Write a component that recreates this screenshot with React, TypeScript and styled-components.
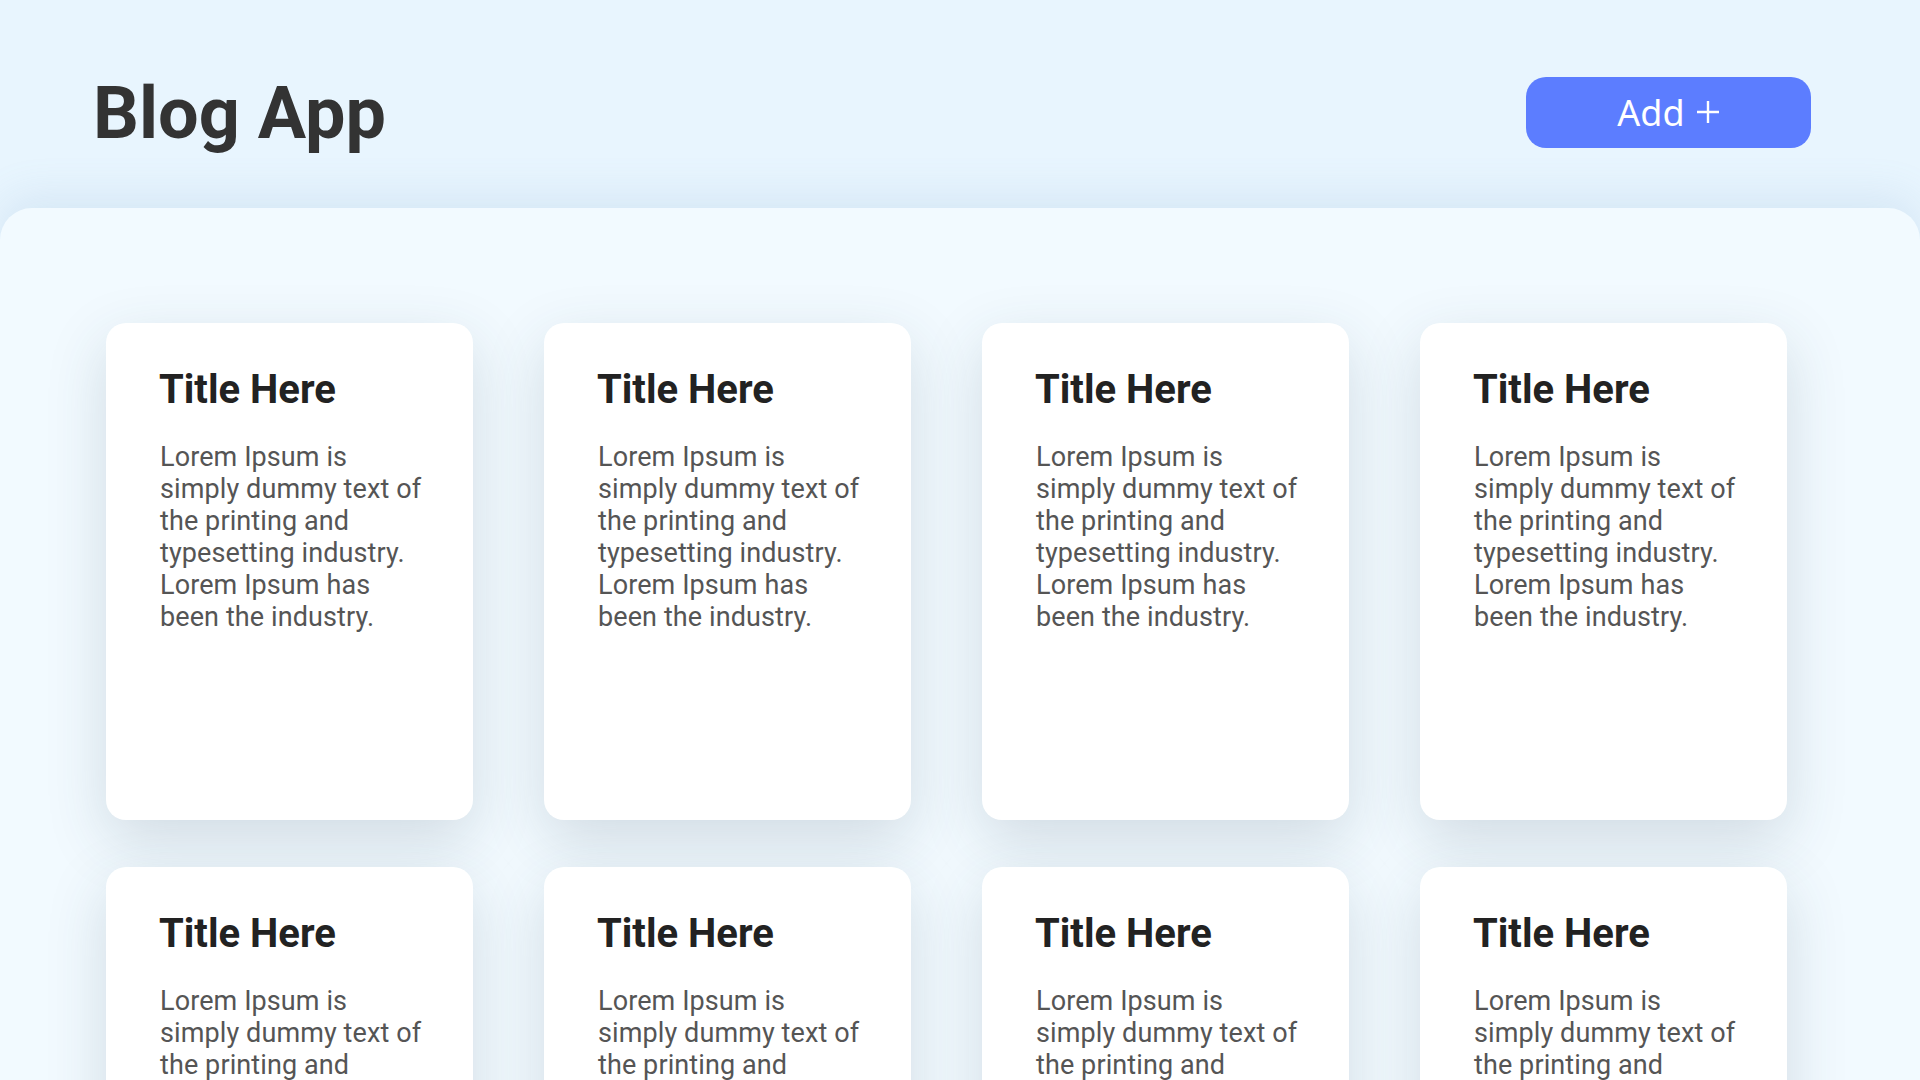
import React from "react";
import styled, { createGlobalStyle } from "styled-components";

const GlobalStyle = createGlobalStyle`
  html, body {
    margin: 0;
    padding: 0;
    background: #e8f5fe;
    font-family: Roboto, "Liberation Sans", sans-serif;
  }
  * { box-sizing: border-box; }
`;

const Page = styled.div`
  min-height: 100vh;
  display: flex;
  flex-direction: column;
  background: #e8f5fe;
`;

const Header = styled.header`
  height: 208px;
  display: flex;
  align-items: center;
  justify-content: space-between;
  padding: 17px 109px 0 93px;
`;

const Logo = styled.h1`
  margin: 3px 0 0;
  font-family: Roboto, "Liberation Sans", sans-serif;
  font-weight: 700;
  font-size: 72px;
  line-height: 1;
  color: #333333;
`;

const AddButton = styled.button`
  width: 285px;
  height: 71px;
  border: none;
  border-radius: 20px;
  background: #5c7dff;
  color: #ffffff;
  font-family: "Noto Sans", "Open Sans", sans-serif;
  font-size: 36px;
  font-weight: 400;
  display: flex;
  align-items: center;
  justify-content: center;
  gap: 11px;
  cursor: pointer;
`;

const PlusIcon = styled.svg`
  width: 24px;
  height: 24px;
  margin-top: -2px;
`;

const Panel = styled.main`
  flex: 1;
  background: #f2faff;
  border-radius: 32px 32px 0 0;
  box-shadow: 0 -12px 40px rgba(120, 160, 200, 0.16);
  padding: 115px 0 80px 106px;
`;

const Grid = styled.div`
  display: grid;
  grid-template-columns: repeat(4, 367px);
  column-gap: 71px;
  row-gap: 47px;
`;

const Card = styled.article`
  height: 497px;
  background: #ffffff;
  border-radius: 20px;
  padding: 43px 40px 40px 53px;
  box-shadow: 0 20px 60px rgba(50, 70, 90, 0.17);
`;

const CardTitle = styled.h2`
  margin: 0 0 27px;
  font-family: Roboto, "Liberation Sans", sans-serif;
  font-weight: 700;
  font-size: 40px;
  line-height: 48px;
  color: #222222;
`;

const CardText = styled.p`
  margin: 0;
  padding-left: 1px;
  font-family: Roboto, "Liberation Sans", sans-serif;
  font-weight: 400;
  font-size: 27px;
  line-height: 32px;
  letter-spacing: 0.1px;
  color: #555555;
  max-width: 270px;
`;

const posts = Array.from({ length: 8 }, (_, i) => ({
  id: i,
  title: "Title Here",
  body:
    "Lorem Ipsum is simply dummy text of the printing and typesetting industry. Lorem Ipsum has been the industry.",
}));

export default function App() {
  return (
    <>
      <GlobalStyle />
      <Page>
        <Header>
          <Logo>Blog App</Logo>
          <AddButton>
            Add
            <PlusIcon viewBox="0 0 24 24" fill="none" stroke="currentColor" strokeWidth="2.4" strokeLinecap="butt">
              <path d="M12 1v22M1 12h22" />
            </PlusIcon>
          </AddButton>
        </Header>
        <Panel>
          <Grid>
            {posts.map((p) => (
              <Card key={p.id}>
                <CardTitle>{p.title}</CardTitle>
                <CardText>{p.body}</CardText>
              </Card>
            ))}
          </Grid>
        </Panel>
      </Page>
    </>
  );
}
